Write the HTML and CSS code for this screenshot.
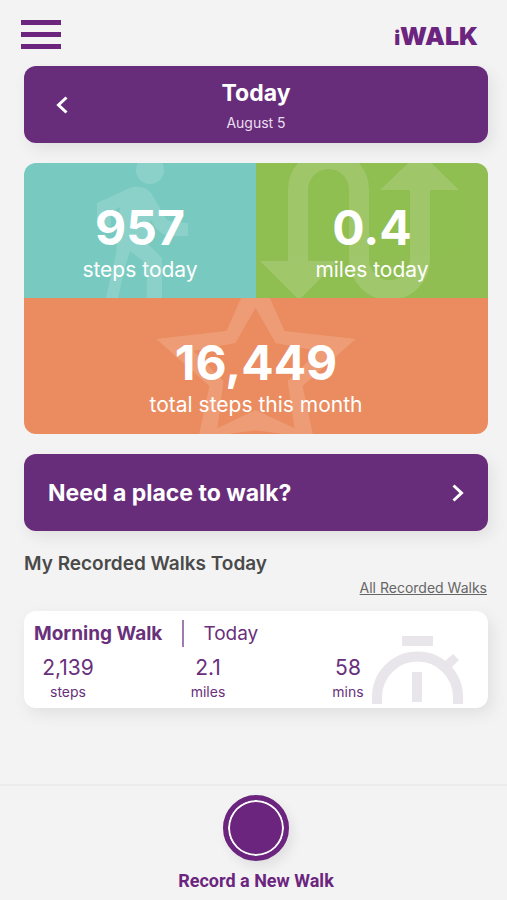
FILE: index.html
```html
<!DOCTYPE html>
<html lang="en">
<head>
<meta charset="utf-8">
<meta name="viewport" content="width=device-width, initial-scale=1">
<title>iWALK</title>
<link rel="stylesheet" href="styles.css">
</head>
<body>
<header class="topbar">
  <button class="menu" type="button" aria-label="Menu"><span></span><span></span><span></span></button>
  <a class="logo" href="#"><span class="logo-i">i</span>WALK</a>
</header>
<main class="content">
  <section class="banner day">
    <button class="chevron" type="button" aria-label="Previous day">
      <svg width="12" height="18" viewBox="0 0 12 18"><path d="M10.500 1.500 2.500 9l8 7.500"/></svg>
    </button>
    <div class="day-text">
      <h1>Today</h1>
      <p>August 5</p>
    </div>
  </section>

  <section class="totals">
    <div class="tile teal">
      <svg class="art" viewBox="0 0 232 135" preserveAspectRatio="xMidYMid slice" aria-hidden="true">
        <circle cx="126" cy="7" r="14"/>
        <path d="M73 40 106 25q13-4 21 5l14 24q2 4 7 5l16 1v13h-14q-12 0-18-8l-6-9-2 25 14 14V135h-15V101l-17-13-5 16-7 31H82l10-44 4-47-9 5v14H73z"/>
      </svg>
      <strong>957</strong><span>steps today</span>
    </div>
    <div class="tile green">
      <svg class="art" viewBox="0 0 232 135" preserveAspectRatio="xMidYMid slice" aria-hidden="true">
        <path class="line" d="M42 98V27a30.500 31 0 0 1 61 0V96a30.500 31 0 0 0 61 0V27"/>
        <path d="M4 98h78l-39 39zM124 27h79l-39-38z"/>
      </svg>
      <strong>0.4</strong><span>miles today</span>
    </div>
    <div class="tile orange">
      <svg class="art" viewBox="0 0 463 136" preserveAspectRatio="xMidYMid slice" aria-hidden="true">
        <path fill-rule="evenodd" d="M231-32 260 33 331 41 278 88 289 140 231 132 174 140 185 88 132 41 202 33zM231 10 251 45 294 53 263 83 270 130 231 112 193 130 199 83 169 53 211 45z"/>
      </svg>
      <strong>16,449</strong><span>total steps this month</span>
    </div>
  </section>

  <a class="banner place" href="#">
    <span>Need a place to walk?</span>
    <svg width="12" height="18" viewBox="0 0 12 18" aria-hidden="true"><path d="M1.500 1.500 9.500 9l-8 7.500"/></svg>
  </a>

  <section class="walks">
    <h2>My Recorded Walks Today</h2>
    <a class="all" href="#">All Recorded Walks</a>
    <article class="walk">
      <svg class="watch" width="92" height="69" viewBox="0 0 92 69" aria-hidden="true">
        <path d="M30 1h31v10H30zM40 37h10v30H40z"/>
        <path d="M72 27l9-8 6 6-9 9z"/>
        <path class="ring" d="M5 69v-7a40.500 40.500 0 0 1 81 0v7"/>
      </svg>
      <div class="walk-head"><h3>Morning Walk</h3><span>Today</span></div>
      <dl class="figures">
        <div><dd>2,139</dd><dt>steps</dt></div>
        <div><dd>2.1</dd><dt>miles</dt></div>
        <div><dd>58</dd><dt>mins</dt></div>
      </dl>
    </article>
  </section>
</main>
<footer class="record">
  <button type="button"><span class="disc"></span><span>Record a New Walk</span></button>
</footer>
</body>
</html>
```

FILE: styles.css
```css
* { box-sizing: border-box; margin: 0; }

body {
  min-height: 100vh;
  display: flex;
  flex-direction: column;
  background: #f3f3f3;
  color: #4a4a4a;
  font-family: Inter, "Liberation Sans", sans-serif;
}

button {
  padding: 0;
  border: 0;
  background: none;
  color: inherit;
  font: inherit;
  cursor: pointer;
}

a { color: inherit; text-decoration: none; }

.topbar {
  height: 66px;
  padding: 0 29px 0 21px;
  display: flex;
  align-items: center;
  justify-content: space-between;
}

.menu { display: grid; gap: 7px; width: 40px; padding-top: 2px; }
.menu span { height: 5px; background: #6c257f; }

.logo {
  padding-top: 8px;
  color: #6c257f;
  font-size: 25px;
  line-height: 32px;
  font-weight: 900;
}
.logo-i { font-size: 20px; }

.content {
  padding: 0 19px 20px 24px;
  display: flex;
  flex-direction: column;
  gap: 20px;
}

.banner {
  min-height: 77px;
  border-radius: 12px;
  background: #682d7a;
  color: #fff;
  box-shadow: 4px 6px 16px rgba(0, 0, 0, .08);
  display: flex;
  align-items: center;
}
.banner svg {
  display: block;
  fill: none;
  stroke: #fff;
  stroke-width: 3;
}

.day { display: grid; grid-template-columns: 76px 1fr 76px; }
.chevron { justify-self: center; }
.day-text { text-align: center; }
.day h1 { font-size: 23px; line-height: 32px; font-weight: 700; }
.day p { font-size: 14px; line-height: 20px; padding-top: 4px; color: #eadff0; }

.totals {
  display: grid;
  grid-template-columns: 1fr 1fr;
  border-radius: 12px;
  overflow: hidden;
}
.tile {
  position: relative;
  padding: 37px 8px 14px;
  display: flex;
  flex-direction: column;
  align-items: center;
  color: #fff;
}
.tile strong, .tile > span { position: relative; }
.tile strong { font-size: 48px; line-height: 56px; font-weight: 700; }
.tile > span { font-size: 21px; line-height: 28px; }
.art {
  position: absolute;
  inset: 0;
  width: 100%;
  height: 100%;
  fill: #fff;
  opacity: .14;
}
.art .line { fill: none; stroke: #fff; stroke-width: 20; }
.teal { background: #78cac0; }
.green { background: #90be52; }
.orange {
  grid-column: 1 / -1;
  padding-bottom: 15px;
  background: #ea8c60;
}

.place {
  padding: 0 24px;
  justify-content: space-between;
  font-size: 23px;
  font-weight: 700;
}

.walks { display: flex; flex-direction: column; }
.walks h2 { font-size: 19px; line-height: 26px; font-weight: 600; }
.all {
  align-self: flex-end;
  padding: 1px 1px 13px 0;
  font-size: 14px;
  line-height: 20px;
  text-decoration: underline;
  color: #666;
}

.walk {
  position: relative;
  padding: 9px 10px 6px;
  border-radius: 12px;
  background: #fff;
  box-shadow: 4px 6px 16px rgba(0, 0, 0, .08);
  color: #69307c;
}
.watch {
  position: absolute;
  right: 24px;
  bottom: 4px;
  fill: #e8e6ea;
}
.watch .ring { fill: none; stroke: #e8e6ea; stroke-width: 10; }

.walk-head { display: flex; align-items: center; }
.walk-head h3 { font-size: 19px; line-height: 27px; font-weight: 700; }
.walk-head span {
  margin-left: 20px;
  padding-left: 19px;
  border-left: 2px solid #a17bb0;
  font-size: 19px;
  line-height: 27px;
}
.figures {
  position: relative;
  display: flex;
  justify-content: space-between;
  padding-top: 7px;
  margin-right: 96px;
}
.figures div {
  width: 68px;
  display: flex;
  flex-direction: column;
  align-items: center;
}
.figures dd { margin: 0; font-size: 21px; line-height: 28px; }
.figures dt { font-size: 14px; line-height: 20px; }

.record {
  margin-top: auto;
  padding: 9px 19px 8px 24px;
  border-top: 2px solid #ececec;
  display: flex;
  justify-content: center;
}
.record button {
  display: flex;
  flex-direction: column;
  align-items: center;
  gap: 9px;
  color: #6c257f;
  font: 700 18px/22px Roboto, sans-serif;
}
.disc {
  width: 66px;
  height: 66px;
  border: 5px solid #6c257f;
  border-radius: 50%;
  background: #6c257f;
  box-shadow: inset 0 0 0 2px #fff, 4px 6px 12px rgba(0, 0, 0, .08);
}
```
